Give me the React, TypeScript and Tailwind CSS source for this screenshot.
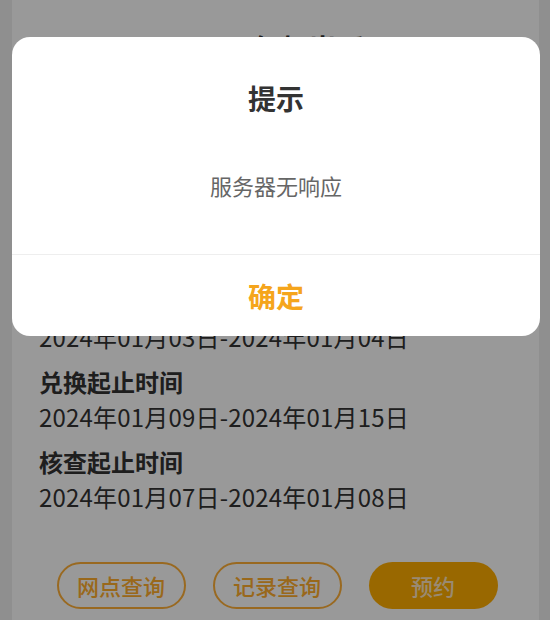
import React from 'react';

const FONT = "font-['Noto_Sans_CJK_SC','Noto_Sans',sans-serif]";

const rows = [
  { label: '纪念币面额', value: '10元' },
  { label: '发行数量', value: '2亿枚' },
  { label: '预约起止时间', value: '2024年01月03日-2024年01月04日' },
  { label: '兑换起止时间', value: '2024年01月09日-2024年01月15日' },
  { label: '核查起止时间', value: '2024年01月07日-2024年01月08日' },
];

const App: React.FC = () => {
  return (
    <div className={`relative h-[620px] w-[550px] overflow-hidden bg-[#eeeeee] ${FONT}`}>
      {/* Page underneath */}
      <div className="ml-[12px] mr-[11px] h-full bg-white">
        <h1 className="pt-[30px] text-center text-[28px] font-bold leading-[36px] text-[#333]">2024年贺岁币</h1>
        <div className="h-[58px]" />
        <div className="px-[27px]">
          {rows.map(r => (
            <div key={r.label} className="mb-[10px]">
              <div className="text-[24px] font-semibold leading-[35px] text-[#333]">{r.label}</div>
              <div className="text-[24px] leading-[35px] tracking-[0.2px] text-[#333]">{r.value}</div>
            </div>
          ))}
        </div>
        <div className="mt-[48px] flex justify-center gap-[27px] pl-[3px]">
          <button className="h-[47px] w-[129px] rounded-full border-2 border-[#ffb037] text-[22px] font-medium text-[#ffad2e]">网点查询</button>
          <button className="h-[47px] w-[129px] rounded-full border-2 border-[#ffb037] text-[22px] font-medium text-[#ffad2e]">记录查询</button>
          <button className="h-[47px] w-[129px] rounded-full bg-[#ffad00] text-[22px] font-medium text-[#ffe6bf]">预约</button>
        </div>
      </div>

      {/* Mask */}
      <div className="absolute inset-0 bg-black/40" />

      {/* Dialog */}
      <div className="absolute left-[12px] top-[37px] w-[528px] rounded-[18px] bg-white">
        <div className="pt-[44px] text-center text-[28px] font-semibold leading-[34px] text-[#333]">提示</div>
        <div className="pt-[55px] pb-[54px] text-center text-[22px] leading-[30px] text-[#666]">服务器无响应</div>
        <div className="border-t border-[#eeeeee] flex h-[82px] items-center justify-center">
          <span className="text-[28px] font-semibold text-[#f5a51c]">确定</span>
        </div>
      </div>
    </div>
  );
};

export default App;
